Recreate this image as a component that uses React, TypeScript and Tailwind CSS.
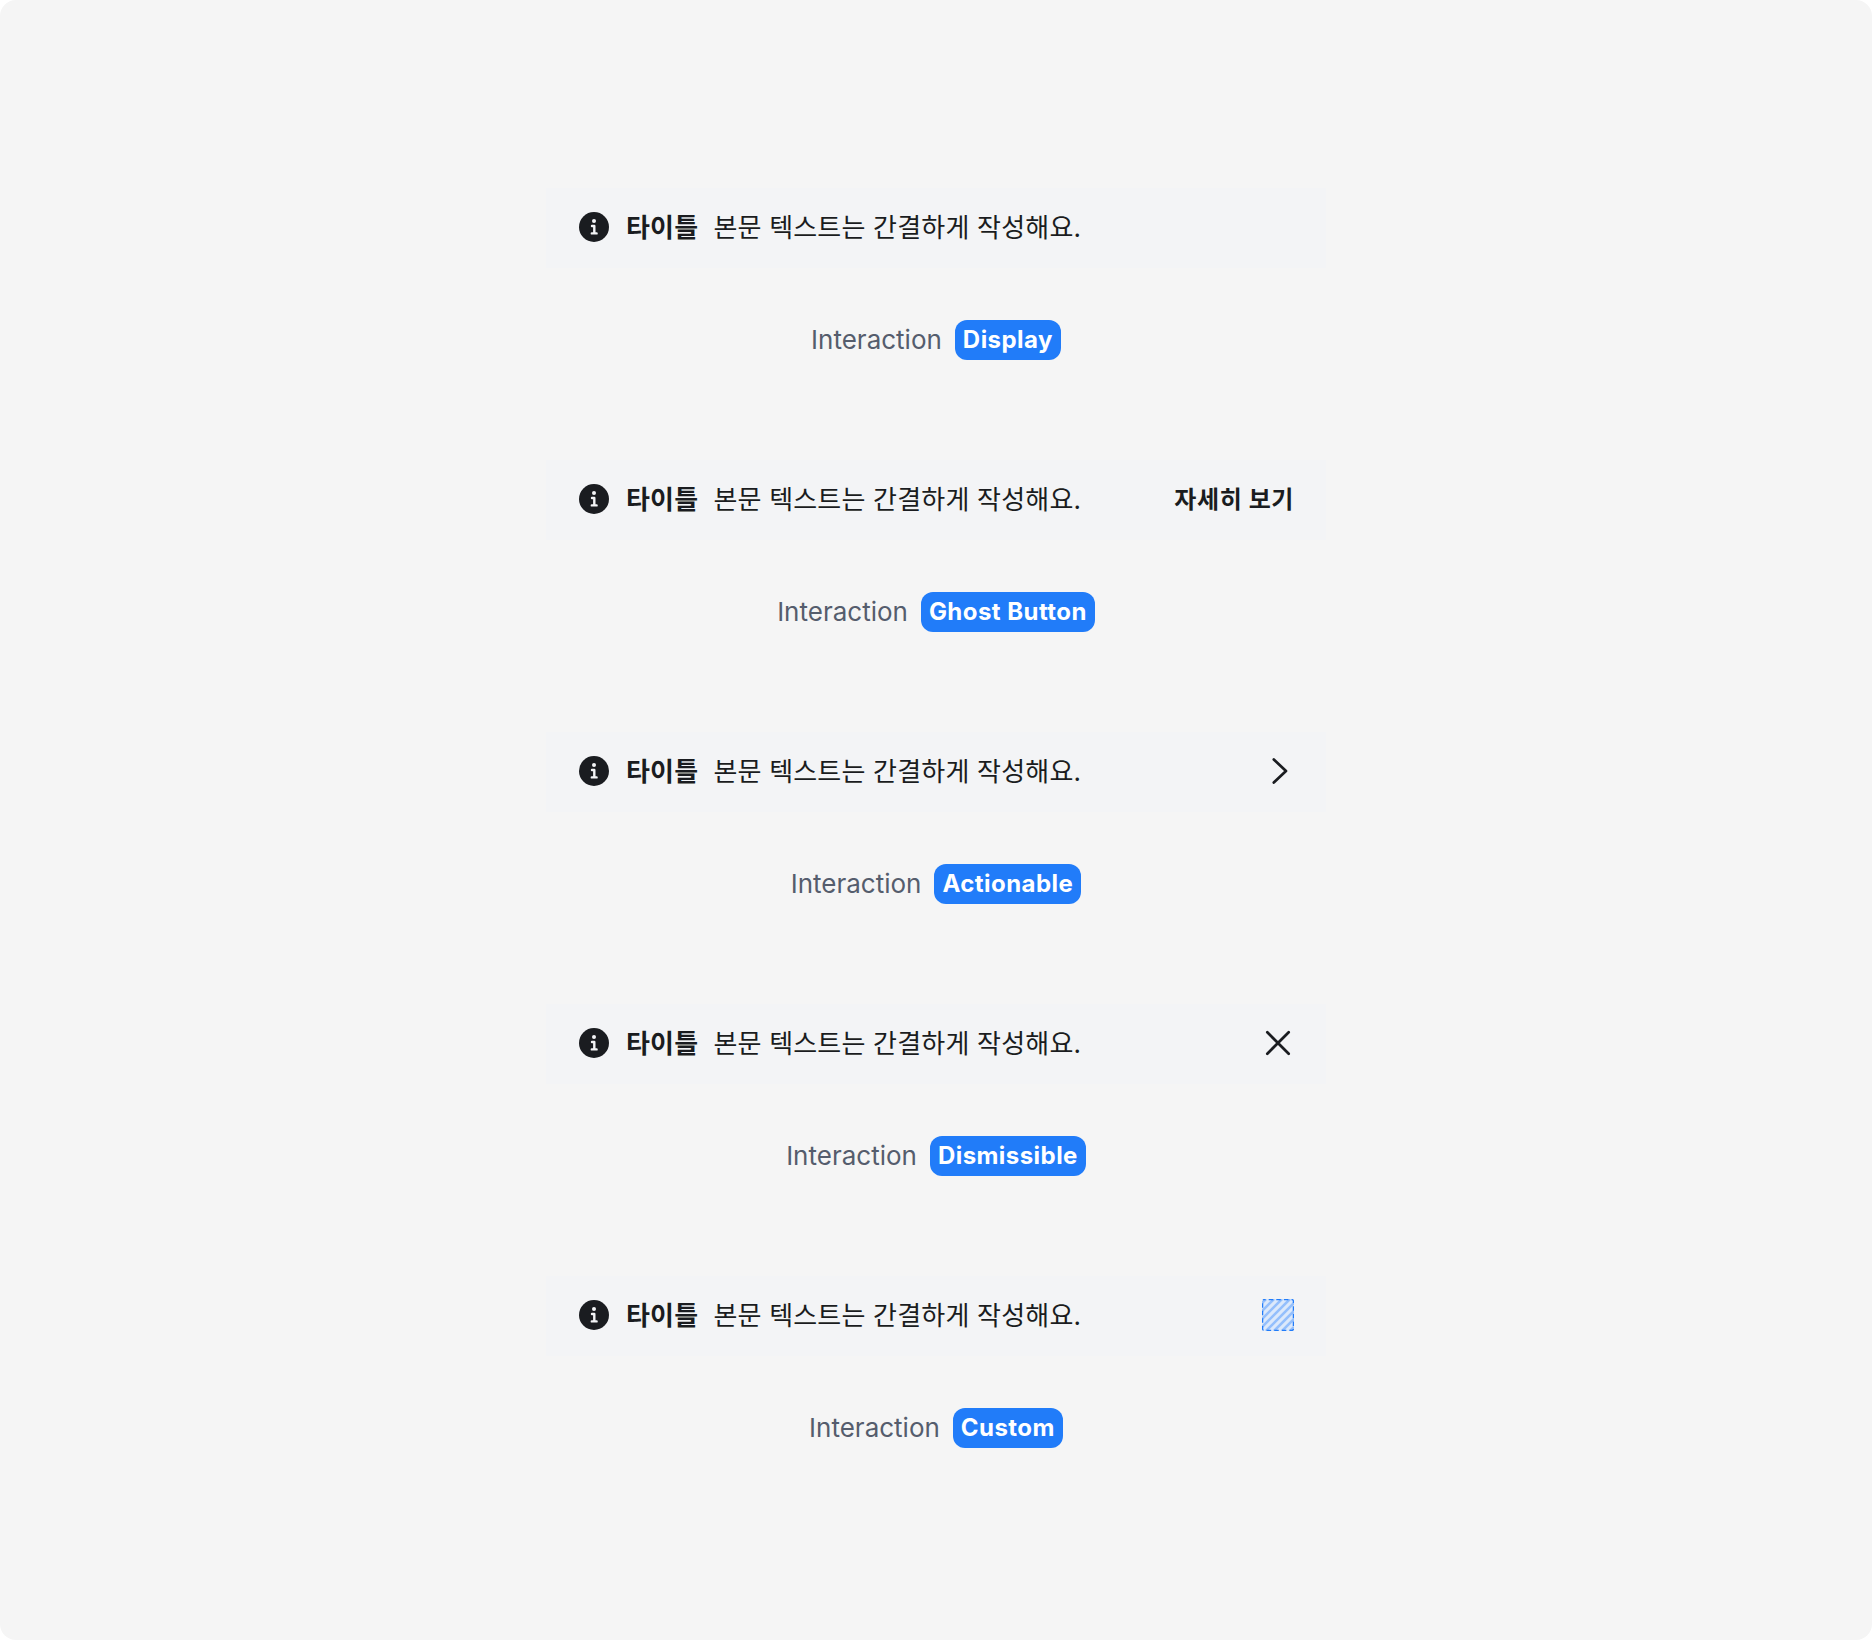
import type { ReactNode } from 'react';

type Interaction = 'Display' | 'Ghost Button' | 'Actionable' | 'Dismissible' | 'Custom';

const interactions: Interaction[] = ['Display', 'Ghost Button', 'Actionable', 'Dismissible', 'Custom'];

function InfoIcon() {
  return (
    <svg className="h-8 w-8 shrink-0" viewBox="0 0 32 32" fill="none">
      <circle cx="16" cy="16" r="15" fill="#1a1c20" />
      <circle cx="16" cy="10" r="2" fill="#f3f4f6" />
      <path
        d="M14 15h2.3v7.3M13.8 22.4h4.8"
        stroke="#f3f4f6"
        strokeWidth="2.4"
        strokeLinecap="round"
        strokeLinejoin="round"
      />
    </svg>
  );
}

function ChevronIcon() {
  return (
    <svg className="h-8 w-8" viewBox="0 0 32 32" fill="none">
      <path
        d="M11.8 4.5 24 16 11.8 27.5"
        stroke="#1a1c20"
        strokeWidth="2.7"
        strokeLinecap="round"
        strokeLinejoin="round"
      />
    </svg>
  );
}

function CloseIcon() {
  return (
    <svg className="h-8 w-8" viewBox="0 0 32 32" fill="none">
      <path d="M5.3 5.3 26.7 26.7M26.7 5.3 5.3 26.7" stroke="#1a1c20" strokeWidth="2.7" strokeLinecap="round" />
    </svg>
  );
}

// Placeholder for a custom slot
function SlotIcon() {
  return (
    <svg className="h-8 w-8" viewBox="0 0 32 32" fill="none">
      <rect width="32" height="32" rx="2" fill="#dce9fb" />
      <path
        d="M0 4 4 0M0 12 12 0M0 20 20 0M0 28 28 0M4 32 32 4M12 32 32 12M20 32 32 20M28 32 32 28"
        stroke="#94bffc"
        strokeWidth="2.5"
      />
      <rect
        x="0.6"
        y="0.6"
        width="30.8"
        height="30.8"
        rx="1.5"
        stroke="#217cf9"
        strokeWidth="1.3"
        strokeDasharray="4.5 3.1"
        strokeDashoffset="3"
      />
    </svg>
  );
}

const suffixes: Record<Interaction, ReactNode> = {
  Display: null,
  'Ghost Button': <button className="pt-0.5 text-[24px] leading-8 font-bold tracking-[0.6px]">자세히 보기</button>,
  Actionable: <ChevronIcon />,
  Dismissible: <CloseIcon />,
  Custom: <SlotIcon />,
};

function Callout({ interaction }: { interaction: Interaction }) {
  return (
    <div className="flex h-20 w-[780px] items-center bg-[#f3f4f6] px-8 pb-0.5 text-[#1a1c20]">
      <InfoIcon />
      <p className="ml-4 flex-1 pt-0.5 text-[26px] leading-9 tracking-[0.2px] whitespace-nowrap">
        <span className="mr-[15px] font-bold">타이틀</span>
        <span>본문 텍스트는 간결하게 작성해요.</span>
      </p>
      {suffixes[interaction]}
    </div>
  );
}

function Label({ value }: { value: string }) {
  return (
    <div className="flex items-center gap-[13px]">
      <span className="text-[26px] leading-10 text-[#555d6d]">Interaction</span>
      <span className="h-10 rounded-xl bg-[#217cf9] px-2 text-[24px] leading-10 font-bold tracking-[0.45px] text-white">
        {value}
      </span>
    </div>
  );
}

export default function App() {
  return (
    <main className="flex h-[1640px] w-[1872px] flex-col items-center gap-[100px] rounded-2xl bg-[#f5f5f5] pt-[188px] font-['Inter','Noto_Sans_CJK_KR',sans-serif]">
      {interactions.map((interaction) => (
        <section key={interaction} className="flex flex-col items-center gap-[52px]">
          <Callout interaction={interaction} />
          <Label value={interaction} />
        </section>
      ))}
    </main>
  );
}
